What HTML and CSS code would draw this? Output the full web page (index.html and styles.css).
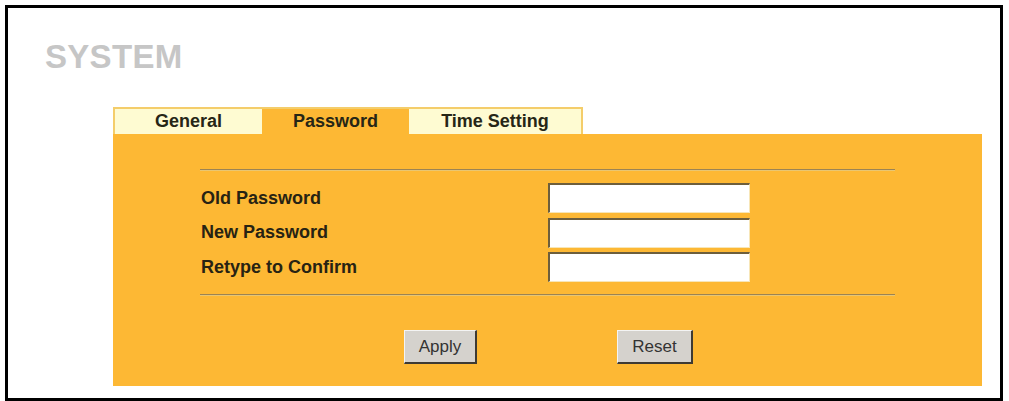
FILE: index.html
```html
<!DOCTYPE html>
<html>
<head>
<meta charset="utf-8">
<link rel="stylesheet" href="styles.css">
</head>
<body>
<div class="frame">
  <h1 class="title">SYSTEM</h1>
  <div class="tabs">
    <div class="tab">General</div>
    <div class="tab active">Password</div>
    <div class="tab wide">Time Setting</div>
  </div>
  <div class="panel">
    <div class="rule"></div>
    <div class="form">
      <div class="label">Old Password</div>
      <input class="field" type="password">
      <div class="label">New Password</div>
      <input class="field" type="password">
      <div class="label">Retype to Confirm</div>
      <input class="field" type="password">
    </div>
    <div class="rule second"></div>
    <div class="actions">
      <button class="btn apply">Apply</button>
      <button class="btn reset">Reset</button>
    </div>
  </div>
</div>
</body>
</html>
```

FILE: styles.css
```css
html, body {
  margin: 0;
  padding: 0;
  background: #ffffff;
}

body {
  font-family: "Liberation Sans", Arial, sans-serif;
}

.frame {
  box-sizing: border-box;
  margin: 5px 0 0 5px;
  width: 998px;
  height: 396px;
  border: 3px solid #000;
  padding-top: 32px;
}

.title {
  margin: 0 0 34px 37px;
  font-size: 33px;
  line-height: 33px;
  font-weight: bold;
  color: #c6c6c6;
  letter-spacing: 0.3px;
}

.tabs {
  display: flex;
  margin-left: 105px;
  height: 27px;
  width: 470px;
  box-sizing: border-box;
  border: 2px solid #f4cd6a;
  border-bottom: none;
  background: #f4cd6a;
}

.tab {
  width: 147px;
  background: #fefbd2;
  color: #262616;
  font-size: 18px;
  font-weight: bold;
  text-align: center;
  line-height: 25px;
}

.tab.active {
  background: #fdb834;
}

.tab.wide {
  flex: 1;
}

.panel {
  box-sizing: border-box;
  margin-left: 105px;
  width: 869px;
  height: 252px;
  background: #fdb834;
  padding: 35px 87px 0 87px;
}

.rule {
  height: 0;
  border-top: 1px solid #9b8353;
  border-bottom: 1px solid #e9c672;
}

.rule.second {
  margin-top: 12px;
}

.form {
  display: grid;
  grid-template-columns: 347px 202px;
  grid-auto-rows: 30px;
  row-gap: 4.5px;
  margin-top: 12px;
  padding-left: 1px;
}

.label {
  display: flex;
  align-items: center;
  font-size: 18px;
  font-weight: bold;
  color: #272313;
}

.field {
  box-sizing: border-box;
  width: 202px;
  height: 30px;
  margin: 0;
  padding: 0;
  background: #fff;
  border-style: solid;
  border-width: 2px 1px 1px 2px;
  border-color: #6d5e3c #f7e6b8 #f7e6b8 #6d5e3c;
  outline: none;
}

.actions {
  display: flex;
  gap: 140px;
  margin-top: 34px;
  padding-left: 204px;
}

.btn {
  box-sizing: border-box;
  height: 34px;
  margin: 0;
  padding: 0;
  background: #d5d2cd;
  border-style: solid;
  border-width: 1px 2px 2px 1px;
  border-color: #f4f4f4 #3e3a33 #3e3a33 #f4f4f4;
  font-family: "Liberation Sans", Arial, sans-serif;
  font-size: 17px;
  color: #333;
}

.btn.apply {
  width: 73px;
}

.btn.reset {
  width: 76px;
}
```
